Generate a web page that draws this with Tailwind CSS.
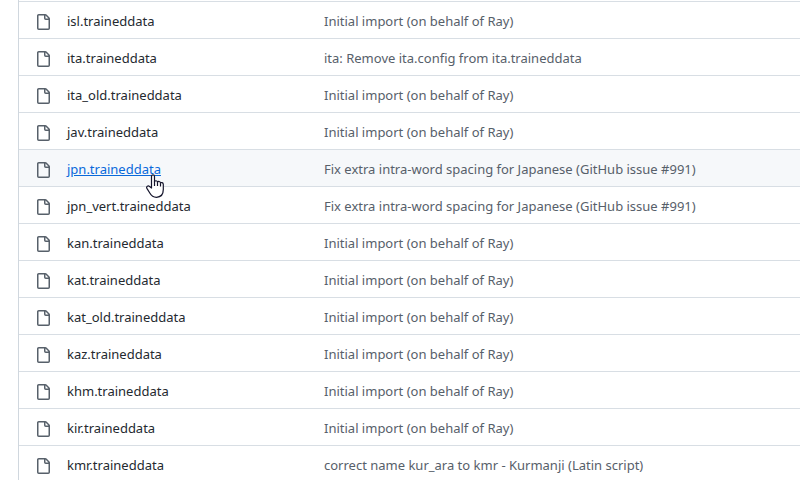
<!DOCTYPE html>
<html lang="en">
<head>
  <meta charset="UTF-8" />
  <meta name="viewport" content="width=device-width, initial-scale=1.0" />
  <title>tessdata</title>
  <script src="https://cdn.jsdelivr.net/npm/@tailwindcss/browser@4"></script>
</head>
<body class="bg-white text-[#24292f] font-['Segoe_UI','Noto_Sans',sans-serif] text-[13px] leading-5">

  <svg class="hidden">
    <symbol id="file" viewBox="0 0 16 16">
      <path d="M2 1.75C2 .784 2.784 0 3.75 0h6.586c.464 0 .909.184 1.237.513l2.914 2.914c.329.328.513.773.513 1.237v9.586A1.75 1.75 0 0 1 13.25 16h-9.5A1.75 1.75 0 0 1 2 14.25Zm1.75-.25a.25.25 0 0 0-.25.25v12.5c0 .138.112.25.25.25h9.5a.25.25 0 0 0 .25-.25V6h-2.75A1.75 1.75 0 0 1 9 4.25V1.5Zm6.75.062V4.25c0 .138.112.25.25.25h2.688l-.011-.013-2.914-2.914-.013-.011Z" />
    </symbol>
  </svg>

  <main class="h-screen overflow-hidden pl-[18px]">
    <div class="border-l border-[#d0d7de] pt-px">
      <table class="w-full table-fixed border-separate border-spacing-0 text-left">
        <colgroup>
          <col class="w-12" />
          <col class="w-[257px]" />
          <col />
        </colgroup>
        <tbody id="files"></tbody>
      </table>
    </div>
  </main>

  <!-- Hand pointer shown on the active row -->
  <template id="pointer">
    <svg class="absolute left-[79px] top-[15px] z-10 w-[18px] h-6 pointer-events-none" viewBox="0 0 18 24" aria-hidden="true">
      <path d="M5.5 14V2.6C5.5 .2 8.5 .2 8.5 2.6V8C8.8 6.2 11.5 6.4 11.5 8.4C12 6.9 14.5 7.2 14.5 9.2C15 8 17.3 8.4 17.3 10.4V15.5C17.3 20.5 14.5 23.3 10.5 23.3C7 23.3 5.2 21.6 3.8 19L.9 14.4C-.1 12.6 2.2 11.2 3.6 12.6Z" fill="#fff" stroke="#14142b" stroke-width="1.2" stroke-linejoin="round" />
      <path d="M8.5 7.5V12M11.5 8.4V12M14.5 9.2V12.5" fill="none" stroke="#14142b" stroke-width="1.2" />
    </svg>
  </template>

  <script>
    const initial = 'Initial import (on behalf of Ray)';
    const spacing = 'Fix extra intra-word spacing for Japanese (GitHub issue #991)';
    const active = 'jpn.traineddata';

    const files = [
      ['isl.traineddata', initial],
      ['ita.traineddata', 'ita: Remove ita.config from ita.traineddata'],
      ['ita_old.traineddata', initial],
      ['jav.traineddata', initial],
      ['jpn.traineddata', spacing],
      ['jpn_vert.traineddata', spacing],
      ['kan.traineddata', initial],
      ['kat.traineddata', initial],
      ['kat_old.traineddata', initial],
      ['kaz.traineddata', initial],
      ['khm.traineddata', initial],
      ['kir.traineddata', initial],
      ['kmr.traineddata', 'correct name kur_ara to kmr - Kurmanji (Latin script)'],
    ];

    const pointer = document.getElementById('pointer').innerHTML;

    document.getElementById('files').innerHTML = files.map(([name, message]) => {
      const on = name === active;
      return `
        <tr class="${on ? 'bg-[#f6f8fa]' : 'bg-white'}">
          <td class="h-[37px] border-t border-[#d8dee4] pl-4 pt-1">
            <svg class="size-4 fill-[#57606a]" aria-hidden="true"><use href="#file" /></svg>
          </td>
          <th scope="row" class="h-[37px] border-t border-[#d8dee4] pt-px font-normal">
            <div class="relative">
              <a href="#${name}" class="${on ? 'text-[#0969da] underline' : 'hover:text-[#0969da] hover:underline'}">${name}</a>
              ${on ? pointer : ''}
            </div>
          </th>
          <td class="h-[37px] border-t border-[#d8dee4] pt-px pr-4 truncate text-[#57606a]">${message}</td>
        </tr>`;
    }).join('');
  </script>
</body>
</html>
